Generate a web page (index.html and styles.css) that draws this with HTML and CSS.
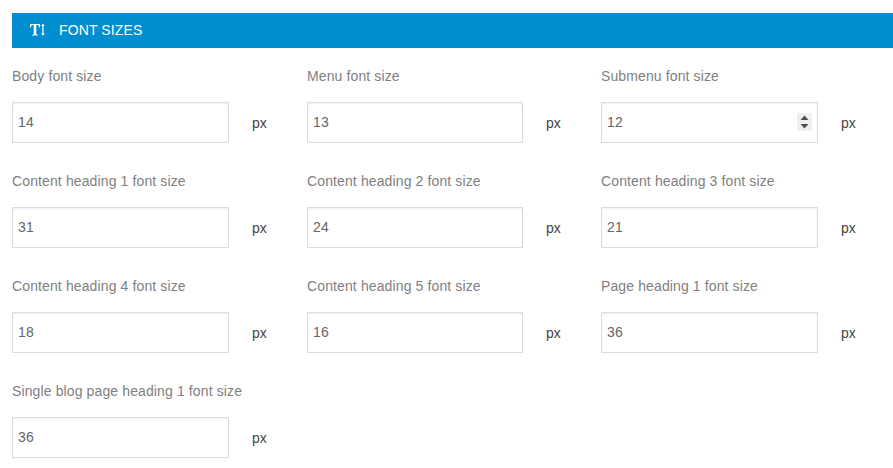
FILE: index.html
```html
<!DOCTYPE html>
<html lang="en"><head><meta charset="utf-8"><title>Font sizes</title><link rel="stylesheet" href="styles.css"></head>
<body>
<h2 class="section-title"><svg class="icon" width="16" height="14" viewBox="0 0 16 14"><path fill="#fff" d="M0 1h10v3.500H9.200C9 2.500 8.500 2 6.300 2v8.700c0 .8.300 1 1.700 1.100v.7H2v-.7c1.400-.1 1.700-.3 1.700-1.100V2C1.500 2 1 2.500.800 4.500H0zM12.300 3H11l1.900-2.200L14.800 3h-1.300v7.500h1.300l-1.900 2.200-1.900-2.200h1.300z"/></svg><span>FONT SIZES</span></h2>
<main class="fields">
<div class="field"><label>Body font size</label><div class="row"><div class="input">14</div><span class="unit">px</span></div></div>
<div class="field"><label>Menu font size</label><div class="row"><div class="input">13</div><span class="unit">px</span></div></div>
<div class="field"><label>Submenu font size</label><div class="row"><div class="input">12<svg class="spinner" width="15" height="18" viewBox="0 0 15 18"><path fill="#f0f0f0" d="M0 0h15v18H0z"/><path fill="#505050" d="M3.500 7l4-4.500 4 4.500zM3.500 11h8l-4 4.500z"/></svg></div><span class="unit">px</span></div></div>
<div class="field"><label>Content heading 1 font size</label><div class="row"><div class="input">31</div><span class="unit">px</span></div></div>
<div class="field"><label>Content heading 2 font size</label><div class="row"><div class="input">24</div><span class="unit">px</span></div></div>
<div class="field"><label>Content heading 3 font size</label><div class="row"><div class="input">21</div><span class="unit">px</span></div></div>
<div class="field"><label>Content heading 4 font size</label><div class="row"><div class="input">18</div><span class="unit">px</span></div></div>
<div class="field"><label>Content heading 5 font size</label><div class="row"><div class="input">16</div><span class="unit">px</span></div></div>
<div class="field"><label>Page heading 1 font size</label><div class="row"><div class="input">36</div><span class="unit">px</span></div></div>
<div class="field"><label>Single blog page heading 1 font size</label><div class="row"><div class="input">36</div><span class="unit">px</span></div></div>
</main>
</body></html>
```
FILE: styles.css
```css
* { box-sizing: border-box; }
body { margin: 0; padding: 13px 0 0 12px; height: 468px; overflow: hidden; background: #fff; font: 14px/20px "Liberation Sans", Arial, sans-serif; }
.section-title { display: flex; align-items: center; height: 35px; margin: 0; padding-left: 18px; background: #008ed0; color: #fff; font-size: 14px; font-weight: 400; letter-spacing: .12px; }
.section-title span { padding-bottom: 2px; }
.icon { margin: 0 13px 1px 0; }
.fields { display: grid; grid-template-columns: 295px 294px 1fr; grid-auto-rows: 105px; padding-top: 18px; }
.field label { display: block; color: #808080; white-space: nowrap; letter-spacing: .12px; }
.row { display: flex; align-items: center; margin-top: 16px; }
.input { display: flex; align-items: center; justify-content: space-between; width: 217px; height: 41px; padding: 0 5px 2px; border: 1px solid #ddd; box-shadow: inset 0 1px 2px rgba(0,0,0,.07); color: #666; letter-spacing: .1px; }
.field:nth-child(3n+2) .input { width: 216px; }
.spinner { margin-top: 1px; }
.unit { margin-left: 23px; color: #444; }
```
